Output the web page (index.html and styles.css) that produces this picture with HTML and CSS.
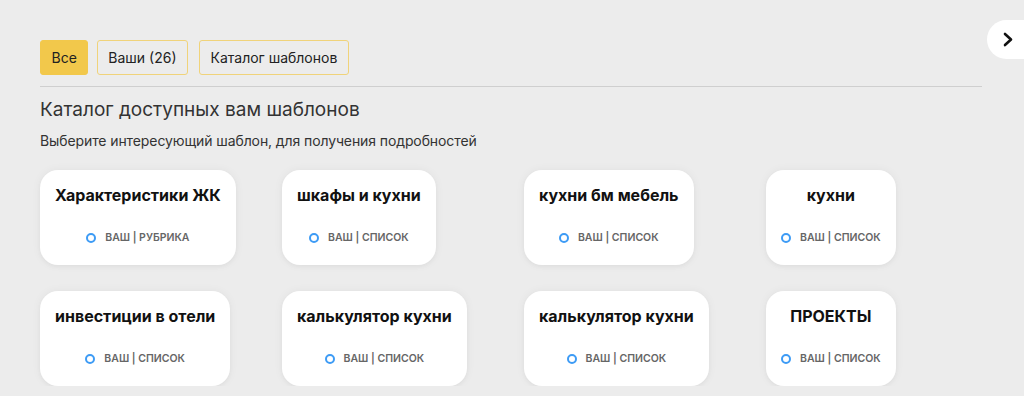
FILE: index.html
```html
<!DOCTYPE html>
<html lang="ru">
<head>
<meta charset="utf-8">
<link rel="stylesheet" href="styles.css">
</head>
<body>
<div class="page">
  <div class="tabs">
    <button class="tab tab-active">Все</button>
    <button class="tab">Ваши (26)</button>
    <button class="tab tab-wide">Каталог шаблонов</button>
  </div>
  <div class="divider"></div>
  <h1 class="title">Каталог доступных вам шаблонов</h1>
  <p class="subtitle">Выберите интересующий шаблон, для получения подробностей</p>
  <div class="grid">
    <div class="cell"><div class="card"><div class="card-title">Характеристики ЖК</div><div class="badge"><span class="dot"></span>ваш | рубрика</div></div></div>
    <div class="cell"><div class="card"><div class="card-title">шкафы и кухни</div><div class="badge"><span class="dot"></span>ваш | список</div></div></div>
    <div class="cell"><div class="card"><div class="card-title">кухни бм мебель</div><div class="badge"><span class="dot"></span>ваш | список</div></div></div>
    <div class="cell"><div class="card"><div class="card-title">кухни</div><div class="badge"><span class="dot"></span>ваш | список</div></div></div>
    <div class="cell"><div class="card"><div class="card-title">инвестиции в отели</div><div class="badge"><span class="dot"></span>ваш | список</div></div></div>
    <div class="cell"><div class="card"><div class="card-title">калькулятор кухни</div><div class="badge"><span class="dot"></span>ваш | список</div></div></div>
    <div class="cell"><div class="card"><div class="card-title">калькулятор кухни</div><div class="badge"><span class="dot"></span>ваш | список</div></div></div>
    <div class="cell"><div class="card"><div class="card-title">ПРОЕКТЫ</div><div class="badge"><span class="dot"></span>ваш | список</div></div></div>
  </div>
</div>
<button class="next" aria-label="Далее">
  <svg width="10" height="15" viewBox="0 0 10 15"><path d="M2 2 L8 7.5 L2 13" fill="none" stroke="#111" stroke-width="2.6" stroke-linecap="round" stroke-linejoin="round"/></svg>
</button>
</body>
</html>
```
FILE: styles.css
```css
html, body {
  margin: 0;
  padding: 0;
  background: #ececec;
  font-family: Inter, "Noto Sans", sans-serif;
  color: #222;
  overflow: hidden;
}
.page {
  padding: 40px 42px 0 40px;
}
.tabs {
  display: flex;
  gap: 9px;
}
.tab {
  font-family: Inter, sans-serif;
  font-size: 14px;
  color: #222;
  background: transparent;
  border: 1px solid #f0d37a;
  border-radius: 3px;
  height: 35px;
  padding: 0 10px;
  cursor: pointer;
}
.tab-active {
  background: #f2c84b;
  border-color: #f2c84b;
  padding: 0 10.5px;
}
.tab-wide {
  margin-left: 2px;
  padding: 0 11px;
}
.divider {
  height: 1px;
  background: #cfcfcf;
  margin-top: 11px;
}
.title {
  font-size: 19px;
  font-weight: 400;
  color: #333;
  margin: 10px 0 0 0;
  line-height: 26px;
}
.subtitle {
  font-size: 14px;
  letter-spacing: -0.1px;
  color: #333;
  margin: 8px 0 0 0;
  line-height: 20px;
}
.grid {
  display: grid;
  grid-template-columns: repeat(4, 242px);
  row-gap: 26px;
  margin-top: 19px;
}
.cell {
  display: flex;
}
.card {
  background: #fff;
  border-radius: 18px;
  box-shadow: 0 0 10px rgba(0, 0, 0, 0.05), 0 2px 4px rgba(0, 0, 0, 0.03);
  padding: 15px 15px 0 15px;
  height: 80px;
  display: flex;
  flex-direction: column;
  align-items: center;
}
.card-title {
  font-size: 16px;
  font-weight: 700;
  color: #111;
  line-height: 20px;
  white-space: nowrap;
}
.badge {
  margin-top: 26px;
  display: flex;
  align-items: center;
  font-size: 10.5px;
  font-weight: 600;
  text-transform: uppercase;
  color: #666;
  line-height: 14px;
}
.dot {
  width: 6px;
  height: 6px;
  border: 2.5px solid #3d9bf5;
  border-radius: 50%;
  margin-right: 9px;
}
.next {
  position: absolute;
  top: 20px;
  left: 987px;
  width: 60px;
  height: 39px;
  border: none;
  border-radius: 20px;
  background: #fff;
  padding: 0 0 0 16px;
  display: flex;
  align-items: center;
  cursor: pointer;
}
```
